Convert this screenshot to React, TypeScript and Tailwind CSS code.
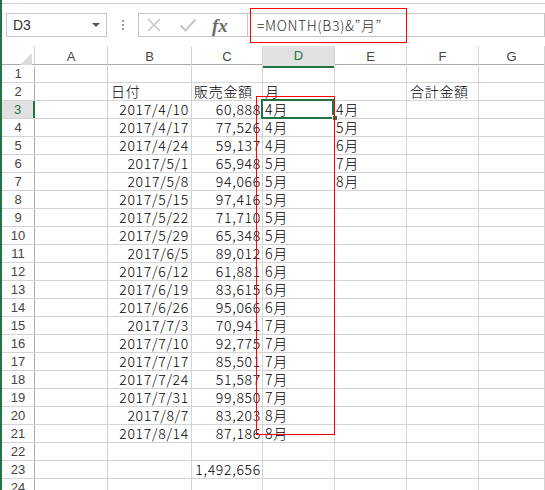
import React from 'react';

const ROWS: Record<number, { b?: string; c?: string; d?: string; e?: string; f?: string }> = {
  2: { b: '日付', c: '販売金額', d: '月', f: '合計金額' },
  3: { b: '2017/4/10', c: '60,888', d: '4月', e: '4月' },
  4: { b: '2017/4/17', c: '77,526', d: '4月', e: '5月' },
  5: { b: '2017/4/24', c: '59,137', d: '4月', e: '6月' },
  6: { b: '2017/5/1', c: '65,948', d: '5月', e: '7月' },
  7: { b: '2017/5/8', c: '94,066', d: '5月', e: '8月' },
  8: { b: '2017/5/15', c: '97,416', d: '5月' },
  9: { b: '2017/5/22', c: '71,710', d: '5月' },
  10: { b: '2017/5/29', c: '65,348', d: '5月' },
  11: { b: '2017/6/5', c: '89,012', d: '6月' },
  12: { b: '2017/6/12', c: '61,881', d: '6月' },
  13: { b: '2017/6/19', c: '83,615', d: '6月' },
  14: { b: '2017/6/26', c: '95,066', d: '6月' },
  15: { b: '2017/7/3', c: '70,941', d: '7月' },
  16: { b: '2017/7/10', c: '92,775', d: '7月' },
  17: { b: '2017/7/17', c: '85,501', d: '7月' },
  18: { b: '2017/7/24', c: '51,587', d: '7月' },
  19: { b: '2017/7/31', c: '99,850', d: '7月' },
  20: { b: '2017/8/7', c: '83,203', d: '8月' },
  21: { b: '2017/8/14', c: '87,186', d: '8月' },
  23: { c: '1,492,656' },
};

const COLS = ['A', 'B', 'C', 'D', 'E', 'F', 'G'];
const GRID = 'grid grid-cols-[33px_73px_84px_71px_72px_72px_72px_1fr]';
const cellFont = { fontFamily: '"Noto Sans CJK JP", sans-serif' };
const headFont = { fontFamily: '"Liberation Sans", Arial, sans-serif' };

function FormulaBar() {
  return (
    <div className="h-[46px] shrink-0">
      <div className="h-[4px] border-b border-[#d4d4d4]" />
      <div className="mt-[9px] flex h-[24px] items-stretch">
        <div className="ml-[4px] flex w-[101px] items-center justify-between border border-[#c6c6c6] pl-[6px] pr-[6px] text-[14px] text-[#333]" style={headFont}>
          <span>D3</span>
          <span className="h-0 w-0 border-x-[4px] border-t-[4px] border-x-transparent border-t-[#555]" />
        </div>
        <div className="flex w-[31px] flex-col items-center justify-center gap-[2px]">
          <span className="h-[2px] w-[2px] bg-[#9a9a9a]" />
          <span className="h-[2px] w-[2px] bg-[#9a9a9a]" />
          <span className="h-[2px] w-[2px] bg-[#9a9a9a]" />
        </div>
        <div className="flex w-[110px] items-center border border-[#c6c6c6]">
          <svg width="16" height="16" viewBox="0 0 16 16" className="ml-[7px]">
            <path d="M2 2 L14 14 M14 2 L2 14" stroke="#c8c8c8" strokeWidth="1.6" fill="none" />
          </svg>
          <svg width="18" height="16" viewBox="0 0 18 16" className="ml-[17px]">
            <path d="M1.5 8.5 L6.5 13.5 L16.5 2.5" stroke="#c8c8c8" strokeWidth="2.2" fill="none" />
          </svg>
          <span className="ml-[15px] text-[19px] font-bold italic leading-none text-[#6b6b6b]" style={{ fontFamily: '"Liberation Serif", serif' }}>
            fx
          </span>
        </div>
        <div className="flex flex-1 items-center border-y border-r border-[#c6c6c6] pl-[9px] text-[14px] font-light tracking-[0.6px] text-[#333]" style={cellFont}>
          =MONTH(B3)&amp;”月”
        </div>
      </div>
    </div>
  );
}

function Sheet() {
  return (
    <div className="flex flex-col">
      <div className={`${GRID} h-[19px] border-b border-[#ababab]`} style={headFont}>
        <div className="relative border-r border-[#d4d4d4]">
          <span className="absolute bottom-[3px] right-[2px] h-0 w-0 border-b-[12px] border-l-[12px] border-b-[#dcdcdc] border-l-transparent" />
        </div>
        {COLS.map((c) =>
          c === 'D' ? (
            <div key={c} className="flex items-center justify-center border-r border-[#d4d4d4] border-b-[2px] border-b-[#217346] bg-[#e1e1e1] text-[13px] text-[#217346]">
              {c}
            </div>
          ) : (
            <div key={c} className="flex items-center justify-center border-r border-[#d4d4d4] text-[13px] text-[#444]">
              {c}
            </div>
          ),
        )}
      </div>
      {Array.from({ length: 24 }).map((_, i) => {
        const n = i + 1;
        const r = ROWS[n] ?? {};
        const sel = n === 3;
        return (
          <div key={n} className={`${GRID} h-[18px] border-b border-[#d4d4d4] text-[14px] font-light leading-[17px] tracking-[0.7px] text-black`}>
            <div
              className={
                sel
                  ? 'flex items-center justify-center border-r-[2px] border-[#217346] bg-[#e1e1e1] text-[13px] font-normal tracking-normal text-[#217346]'
                  : 'flex items-center justify-center border-r border-[#ababab] text-[13px] font-normal tracking-normal text-[#444]'
              }
              style={headFont}
            >
              {n}
            </div>
            <div className="border-r border-[#d4d4d4]" />
            <div className={`overflow-visible whitespace-nowrap border-r border-[#d4d4d4] ${n === 2 ? 'pl-[3px] text-left' : 'pr-[2px] text-right'}`} style={cellFont}>
              {r.b}
            </div>
            <div className={`whitespace-nowrap border-r border-[#d4d4d4] ${n === 2 ? 'pl-[2px] text-left' : 'pr-[1px] text-right'}`} style={cellFont}>
              {r.c}
            </div>
            <div className="relative whitespace-nowrap border-r border-[#d4d4d4] pl-[2px]" style={cellFont}>
              {r.d}
              {sel && (
                <>
                  <span className="absolute left-[-2px] top-[-2px] h-[20px] w-[73px] border-[2px] border-[#217346]" />
                  <span className="absolute right-[-4px] top-[14px] h-[6px] w-[6px] border border-white bg-[#217346]" />
                </>
              )}
            </div>
            <div className="whitespace-nowrap border-r border-[#d4d4d4] pl-[1px]" style={cellFont}>
              {r.e}
            </div>
            <div className="whitespace-nowrap border-r border-[#d4d4d4] pl-[3px]" style={cellFont}>
              {r.f}
            </div>
            <div className="border-r border-[#d4d4d4]" />
          </div>
        );
      })}
    </div>
  );
}

export default function App() {
  return (
    <div className="relative flex h-[490px] w-[545px] overflow-hidden bg-white">
      <div className="w-[2px] shrink-0 bg-[#217346]" />
      <div className="flex min-w-0 flex-1 flex-col">
        <FormulaBar />
        <Sheet />
      </div>
      <div className="pointer-events-none absolute left-[250px] top-[8px] h-[35px] w-[157px] border border-[#ff0000]" />
      <div className="pointer-events-none absolute left-[256px] top-[96px] h-[339px] w-[79px] border-[1.5px] border-[#ff0000]" />
    </div>
  );
}
